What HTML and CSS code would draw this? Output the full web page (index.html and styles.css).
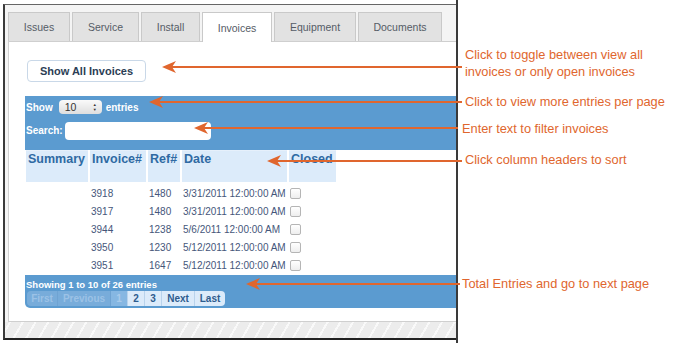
FILE: index.html
```html
<!DOCTYPE html>
<html>
<head>
<meta charset="utf-8">
<link rel="stylesheet" href="styles.css">
</head>
<body>
<div class="stage">
  <div class="frame">
    <div class="tabs">
      <div class="tab w-issues">Issues</div>
      <div class="tab w-service">Service</div>
      <div class="tab w-install">Install</div>
      <div class="tab active w-invoices">Invoices</div>
      <div class="tab w-equipment">Equipment</div>
      <div class="tab w-documents">Documents</div>
    </div>
    <div class="panel">
      <button class="btn">Show All Invoices</button>
      <div class="bar">
        <div class="bar-row">
          <span>Show</span>
          <span class="select">10<span class="spin">&#9650;<br>&#9660;</span></span>
          <span>entries</span>
        </div>
        <div class="bar-row search-row">
          <span>Search:</span>
          <span class="search"></span>
        </div>
      </div>
      <table class="grid">
        <thead>
          <tr>
            <th class="c-sum">Summary</th>
            <th class="c-inv">Invoice#</th>
            <th class="c-ref">Ref#</th>
            <th class="c-date">Date</th>
            <th class="c-closed">Closed</th>
          </tr>
        </thead>
        <tbody>
          <tr class="first"><td></td><td>3918</td><td>1480</td><td>3/31/2011 12:00:00 AM</td><td><span class="cb"></span></td></tr>
          <tr><td></td><td>3917</td><td>1480</td><td>3/31/2011 12:00:00 AM</td><td><span class="cb"></span></td></tr>
          <tr><td></td><td>3944</td><td>1238</td><td>5/6/2011 12:00:00 AM</td><td><span class="cb"></span></td></tr>
          <tr><td></td><td>3950</td><td>1230</td><td>5/12/2011 12:00:00 AM</td><td><span class="cb"></span></td></tr>
          <tr><td></td><td>3951</td><td>1647</td><td>5/12/2011 12:00:00 AM</td><td><span class="cb"></span></td></tr>
        </tbody>
      </table>
      <div class="foot">
        <div class="info">Showing 1 to 10 of 26 entries</div>
        <div class="pager">
          <span class="pg off p-first">First</span><span class="pg off p-prev">Previous</span><span class="pg cur p-num">1</span><span class="pg p-num">2</span><span class="pg p-num">3</span><span class="pg p-next">Next</span><span class="pg last p-last">Last</span>
        </div>
      </div>
    </div>
    <div class="stripes"></div>
  </div>
  <div class="rule"></div>

  <svg class="arrows" width="678" height="343" viewBox="0 0 678 343">
    <g stroke="#e0662e" stroke-width="2" fill="none">
      <line x1="170" y1="67" x2="462" y2="67"/>
      <line x1="157" y1="102" x2="462" y2="102"/>
      <line x1="202" y1="128" x2="458" y2="128"/>
      <line x1="275" y1="161" x2="462" y2="161"/>
      <line x1="254" y1="284" x2="460" y2="284"/>
    </g>
    <g fill="#e0662e">
      <path d="M162 67 L176 61 L172 67 L176 73 Z"/>
      <path d="M149 102 L163 96 L159 102 L163 108 Z"/>
      <path d="M194 128 L208 122 L204 128 L208 134 Z"/>
      <path d="M267 161 L281 155 L277 161 L281 167 Z"/>
      <path d="M246 284 L260 278 L256 284 L260 290 Z"/>
    </g>
  </svg>
  <div class="note n1">Click to toggle between view all<br>invoices or only open invoices</div>
  <div class="note n2">Click to view more entries per page</div>
  <div class="note n3">Enter text to filter invoices</div>
  <div class="note n4">Click column headers to sort</div>
  <div class="note n5">Total Entries and go to next page</div>
</div>
</body>
</html>
```

FILE: styles.css
```css
* { box-sizing: border-box; }
html, body { margin: 0; padding: 0; background: #fff; }
body { font-family: "Liberation Sans", Arial, sans-serif; }

.stage { position: relative; width: 678px; height: 343px; overflow: hidden; }

.frame {
  margin: 4px 0 0 3px;
  width: 454px;
  height: 336px;
  border-left: 2px solid #3a3a3a;
  border-top: 1px solid #666;
  border-bottom: 2px solid #222;
  background: #f4f4f4;
  display: flex;
  flex-direction: column;
}

.rule {
  position: absolute;
  left: 456px; top: 0;
  width: 2px; height: 343px;
  background: #3a3a3a;
}

.tabs {
  display: flex;
  gap: 2px;
  padding: 7px 0 0 3px;
  height: 36px;
  flex: none;
}
.tab {
  height: 29px;
  border: 1px solid #c9c9c9;
  border-bottom: none;
  background: #e2e2e2;
  color: #555c66;
  font-size: 10.5px;
  display: flex;
  align-items: center;
  justify-content: center;
}
.tab.active { background: #fff; height: 30px; margin-bottom: -1px; position: relative; z-index: 1; }
.w-issues { width: 62px; }
.w-service { width: 67px; }
.w-install { width: 59px; }
.w-invoices { width: 70px; }
.w-equipment { width: 82px; }
.w-documents { width: 84px; }

.panel {
  flex: 1;
  margin-left: 3px;
  background: #fff;
  border: 1px solid #cfcfcf;
  border-right: none;
  padding: 18px 0 0 16px;
}

.btn {
  display: block;
  margin-left: 2px;
  width: 119px;
  height: 22px;
  background: #fff;
  border: 1px solid #c9d8e8;
  border-radius: 4px;
  font-family: inherit;
  font-weight: bold;
  font-size: 11px;
  color: #2c3e55;
  padding: 0;
}

.bar {
  margin-top: 14px;
  height: 54px;
  background: #5b9bd0;
  padding: 3px 0 0 1px;
  color: #fff;
  font-weight: bold;
  font-size: 10px;
}
.bar-row { display: flex; align-items: center; gap: 4px; height: 16px; }
.select {
  width: 43px; height: 14px;
  background: linear-gradient(#fafafa, #dedede);
  border-radius: 4px;
  color: #333;
  font-weight: normal;
  font-size: 10.5px;
  display: flex; align-items: center;
  padding-left: 6px;
  margin-left: 2px;
  position: relative;
}
.spin {
  position: absolute; right: 5px; top: 2px;
  font-size: 4px; line-height: 5px; color: #333;
}
.search-row { margin-top: 6px; gap: 2px; height: 19px; }
.search {
  width: 146px; height: 18px;
  background: #fff;
  border-radius: 4px;
}

.grid {
  border-collapse: separate;
  border-spacing: 2px 0;
  margin-left: -1px;
  margin-top: 0;
}
.grid th {
  background: #dcebfa;
  color: #2f6aa3;
  font-size: 12.5px;
  font-weight: bold;
  text-align: left;
  vertical-align: top;
  height: 32px;
  padding: 1px 1px 0 2px;
  border-top: 1px solid #e6f0fb;
}
.c-sum { width: 62px; }
.c-inv { width: 56px; }
.c-ref { width: 32px; }
.c-date { width: 105px; }
.c-closed { width: 47px; }
.grid td {
  font-size: 10px;
  color: #45567a;
  height: 18px;
  padding: 0 0 0 1px;
  vertical-align: middle;
}
.grid tr.first td { padding-top: 2px; height: 20px; }
.cb {
  display: inline-block;
  width: 11px; height: 11px;
  border: 1px solid #b5b5b5;
  border-radius: 2px;
  background: linear-gradient(#fff, #eee);
  vertical-align: middle;
}

.foot {
  margin-top: 1px;
  height: 33px;
  background: #5b9bd0;
  border-bottom-left-radius: 5px;
  padding: 3px 0 0 1px;
}
.info { color: #fff; font-weight: bold; font-size: 9.5px; height: 13px; line-height: 13px; }
.pager { display: flex; margin-left: 1px; }
.pg {
  height: 15px;
  background: #dcebfa;
  color: #2e5c8e;
  font-weight: bold;
  font-size: 10px;
  line-height: 15px;
  text-align: center;
  border-right: 1px solid #b9d3ec;
}
.p-first { width: 31px; }
.p-prev { width: 53px; }
.p-num { width: 17px; }
.p-next { width: 33px; }
.p-last { width: 30px; }
.pg.off { background: #78acda; color: #9cc2e6; border-right-color: #6fa3d2; }
.pg.off:first-child { border-top-left-radius: 4px; border-bottom-left-radius: 4px; }
.pg.cur { background: #86b7e2; color: #a9cbeb; }
.pg.last { border-right: none; border-top-right-radius: 4px; border-bottom-right-radius: 4px; }

.stripes {
  height: 16px;
  flex: none;
  background: repeating-linear-gradient(-60deg, #ececec 0 9px, #f9f9f9 9px 11px);
}

.arrows { position: absolute; left: 0; top: 0; }

.note {
  position: absolute;
  color: #e0662e;
  font-size: 12.8px;
  line-height: 17px;
  white-space: nowrap;
}
.n1 { left: 465px; top: 46px; }
.n2 { left: 465px; top: 93px; }
.n3 { left: 462px; top: 120px; }
.n4 { left: 465px; top: 151px; }
.n5 { left: 462px; top: 275px; }
```
